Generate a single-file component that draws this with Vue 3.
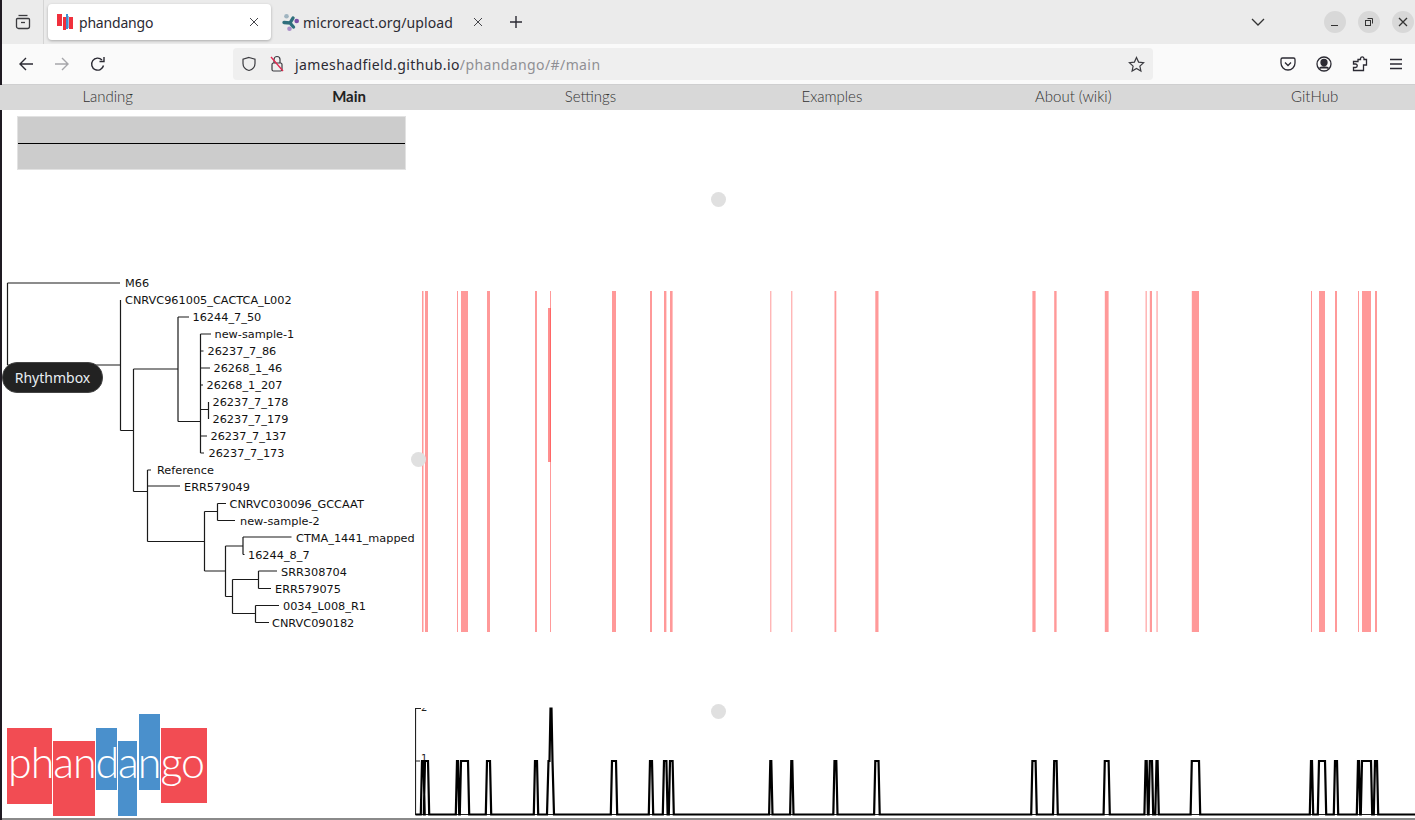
<template>
  <div class="app">
    <div class="strip"></div>
    <div class="window">
      <div class="tabbar">
        <div class="tabview">
          <svg width="16" height="16" viewBox="0 0 16 16" fill="none" stroke="#3b3b3f" stroke-width="1.3">
            <path d="M3.500 1.500h9" />
            <path d="M2.500 4.500h11a1 1 0 0 1 1 1v7a2 2 0 0 1-2 2h-9a2 2 0 0 1-2-2v-7a1 1 0 0 1 1-1z" />
            <path d="M6 8.500h4" />
          </svg>
        </div>
        <div class="tab active">
          <svg class="favicon" width="18" height="17" viewBox="0 0 18 17">
            <rect x="0" y="0" width="5" height="12" fill="#f0303c" />
            <rect x="6" y="3" width="3" height="13" fill="#f0303c" />
            <rect x="9" y="0" width="2" height="15" fill="#3f8fd0" />
            <rect x="11" y="2" width="1" height="12" fill="#8fc0e4" />
            <rect x="12" y="3" width="4" height="12" fill="#f0303c" />
          </svg>
          <span class="tab-title first">phandango</span>
          <svg class="close" width="10" height="10" viewBox="0 0 10 10" stroke="#45454a" stroke-width="1"><path d="M1 1l8 8M9 1l-8 8" /></svg>
        </div>
        <div class="tab second">
          <svg class="favicon" width="17" height="17" viewBox="0 0 17 17">
            <path d="M2 8.500L8 9l3-5M8 9l3.500 4" fill="none" stroke="#2f6f7c" stroke-width="3.400" stroke-linecap="round" />
            <circle cx="4.500" cy="2.300" r="2.300" fill="#9fb4c0" />
            <circle cx="14.700" cy="7" r="2.300" fill="#7a4fa8" />
            <circle cx="7.500" cy="14.700" r="2.300" fill="#a98fc8" />
          </svg>
          <span class="tab-title">microreact.org/upload</span>
          <svg class="close" width="10" height="10" viewBox="0 0 10 10" stroke="#45454a" stroke-width="1"><path d="M1 1l8 8M9 1l-8 8" /></svg>
        </div>
        <svg class="newtab" width="14" height="14" viewBox="0 0 14 14" stroke="#2b2a33" stroke-width="1.400"><path d="M7 1v12M1 7h12" /></svg>
        <div class="tabbar-right">
          <svg class="chevron" width="14" height="8" viewBox="0 0 14 8" fill="none" stroke="#333" stroke-width="1.300"><path d="M1 1l6 6 6-6" /></svg>
          <div class="winbtn">
            <svg width="10" height="10" viewBox="0 0 10 10" stroke="#333" stroke-width="1"><path d="M1 8.500h7" /></svg>
          </div>
          <div class="winbtn">
            <svg width="10" height="10" viewBox="0 0 10 10" fill="none" stroke="#333" stroke-width="1"><rect x="1.500" y="3.500" width="5" height="5" /><path d="M3.500 1.500h5v5" /></svg>
          </div>
          <div class="winbtn">
            <svg width="10" height="10" viewBox="0 0 10 10" stroke="#333" stroke-width="1.300"><path d="M1 1l8 8M9 1l-8 8" /></svg>
          </div>
        </div>
      </div>

      <div class="toolbar">
        <div class="navbtns">
          <svg width="16" height="16" viewBox="0 0 16 16" fill="none" stroke="#2b2a33" stroke-width="1.400"><path d="M15 8H2M8 2L2 8l6 6" /></svg>
          <svg width="16" height="16" viewBox="0 0 16 16" fill="none" stroke="#a6a6aa" stroke-width="1.400"><path d="M1 8h13M8 2l6 6-6 6" /></svg>
          <svg width="16" height="16" viewBox="0 0 16 16" fill="none" stroke="#2b2a33" stroke-width="1.400"><path d="M13.500 9.500A6 6 0 1 1 12 4" /><path d="M14 1v4.500H9.500" /></svg>
        </div>
        <div class="urlbar">
          <svg width="16" height="16" viewBox="0 0 16 16" fill="none" stroke="#3b3b40" stroke-width="1.200"><path d="M8 1.500l6 1.800v4.200c0 3.500-2.500 6-6 7-3.500-1-6-3.500-6-7V3.300z" /></svg>
          <svg class="lock" width="16" height="18" viewBox="0 0 16 18" fill="none">
            <path d="M5 8V4.500a3 3 0 0 1 6 0V8" stroke="#3b3b40" stroke-width="1.200" />
            <rect x="3" y="8" width="10" height="8" rx="1.500" stroke="#3b3b40" stroke-width="1.200" />
            <path d="M2 2l12 14" stroke="#e22850" stroke-width="1.300" />
          </svg>
          <span class="url"><span class="host">jameshadfield.github.io</span><span class="path">/phandango/#/main</span></span>
          <svg class="star" width="17" height="17" viewBox="0 0 17 17" fill="none" stroke="#3b3b40" stroke-width="1.200"><path d="M8.500 1.500l2.100 4.600 5 .6-3.700 3.400 1 4.900-4.400-2.500-4.400 2.500 1-4.900L1.400 6.700l5-.6z" /></svg>
        </div>
        <div class="tools">
          <svg width="16" height="16" viewBox="0 0 16 16" fill="none" stroke="#2b2a33" stroke-width="1.300"><path d="M2.500 2h11A1.500 1.500 0 0 1 15 3.500V7a7 7 0 0 1-14 0V3.500A1.500 1.500 0 0 1 2.500 2z" /><path d="M5 6.500l3 3 3-3" /></svg>
          <svg width="16" height="16" viewBox="0 0 16 16" fill="none" stroke="#2b2a33" stroke-width="1.300"><circle cx="8" cy="8" r="7" /><circle cx="8" cy="6.500" r="3" fill="#2b2a33" /><path d="M3.500 12.500c1-2 8-2 9 0" fill="#2b2a33" /></svg>
          <svg width="16" height="16" viewBox="0 0 16 16" fill="none" stroke="#2b2a33" stroke-width="1.300"><path d="M6 3.500h2.500V2.300a1.800 1.800 0 0 1 3.500 0v1.200h2.500v5.500h-3v5.500H1.500v-3h2a1.500 1.500 0 0 0 0-3.500h-2V5.500H6z" /></svg>
          <svg width="16" height="16" viewBox="0 0 16 16" stroke="#2b2a33" stroke-width="1.300"><path d="M2 3.500h12M2 8h12M2 12.500h12" /></svg>
        </div>
      </div>

      <nav class="sitenav">
        <a v-for="item in navItems" :key="item" :class="{ current: item === 'Main' }">{{ item }}</a>
      </nav>

      <main class="page">
        <div class="top-row">
          <div class="minimap"><div class="minimap-line"></div></div>
        </div>

        <div class="mid-row">
          <svg class="tree" width="413" height="364" viewBox="2 276 413 364">
            <path class="branches" :d="treePath" />
            <text v-for="l in labels" :key="l.name" :x="l.x" :y="l.y" class="leaf">{{ l.name }}</text>
          </svg>
          <svg class="blocks" width="1000" height="364" viewBox="415 276 1000 364">
            <rect v-for="b in bars" :key="b[0]" :x="b[0]" y="291" :width="b[1] - b[0]" height="341" fill="#ff9999" />
            <rect x="548" y="308" width="2" height="154" fill="#ff8f8f" />
            <rect x="550" y="308" width="1" height="154" fill="#ff6666" />
          </svg>
        </div>

        <div class="bottom-row">
          <svg class="logo" width="413" height="178" viewBox="2 640 413 178">
            <rect x="7" y="728" width="45" height="76" fill="#f24c53" />
            <rect x="53" y="741" width="42" height="75" fill="#f24c53" />
            <rect x="96" y="728" width="21" height="62" fill="#4a90cc" />
            <rect x="118" y="741" width="19" height="75" fill="#4a90cc" />
            <rect x="139" y="714" width="21" height="76" fill="#4a90cc" />
            <rect x="161" y="728" width="46" height="75" fill="#f24c53" />
            <text x="8" y="778" class="logotext" textLength="197">phandango</text>
          </svg>
          <svg class="plot" width="1000" height="178" viewBox="415 640 1000 178">
            <clipPath id="plotclip"><rect x="415" y="708" width="1000" height="110" /></clipPath>
            <g clip-path="url(#plotclip)">
              <text x="421" y="711" class="tick">2</text>
              <text x="421" y="762" class="tick">1</text>
            </g>
            <path d="M421 708.500H415.500V814.500H1415M415.500 761H420" fill="none" stroke="#222" stroke-width="1.200" />
            <polyline :points="plotPoints" fill="none" stroke="#000" stroke-width="2.200" />
          </svg>
        </div>

        <span class="handle h1"></span>
        <span class="handle h2"></span>
        <span class="handle h3"></span>
        <div class="tooltip">Rhythmbox</div>
      </main>
      <div class="bottom-edge"></div>
    </div>
  </div>
</template>

<script setup>
import { computed } from 'vue'

const navItems = ['Landing', 'Main', 'Settings', 'Examples', 'About (wiki)', 'GitHub']

const labels = [
  { name: 'M66', x: 125, y: 287 },
  { name: 'CNRVC961005_CACTCA_L002', x: 125, y: 304 },
  { name: '16244_7_50', x: 192.5, y: 321 },
  { name: 'new-sample-1', x: 214.5, y: 338 },
  { name: '26237_7_86', x: 207.5, y: 355 },
  { name: '26268_1_46', x: 213.5, y: 372 },
  { name: '26268_1_207', x: 206.5, y: 389 },
  { name: '26237_7_178', x: 212.5, y: 406 },
  { name: '26237_7_179', x: 212.5, y: 423 },
  { name: '26237_7_137', x: 210.5, y: 440 },
  { name: '26237_7_173', x: 208.5, y: 457 },
  { name: 'Reference', x: 157, y: 474 },
  { name: 'ERR579049', x: 184, y: 491 },
  { name: 'CNRVC030096_GCCAAT', x: 229.5, y: 508 },
  { name: 'new-sample-2', x: 240, y: 525 },
  { name: 'CTMA_1441_mapped', x: 296, y: 542 },
  { name: '16244_8_7', x: 248, y: 559 },
  { name: 'SRR308704', x: 281, y: 576 },
  { name: 'ERR579075', x: 275, y: 593 },
  { name: '0034_L008_R1', x: 283, y: 610 },
  { name: 'CNRVC090182', x: 272, y: 627 }
]

// tree edges as [x1, y1, x2, y2]
const edges = [
  [7.5, 283, 120, 283], [7.5, 283, 7.5, 365], [7.5, 365, 120.5, 365],
  [120.5, 300, 120.5, 430.5], [120.5, 430.5, 133.5, 430.5],
  [133.5, 369, 133.5, 491.5], [133.5, 369, 178, 369],
  [178, 317, 178, 421.5], [178, 317, 189, 317], [178, 421.5, 200, 421.5],
  [200.5, 334, 200.5, 453], [200.5, 334, 211, 334], [200.5, 351, 203.5, 351],
  [200.5, 368, 210, 368], [200.5, 385, 203, 385], [200.5, 409.5, 208.5, 409.5],
  [208.5, 402, 208.5, 419], [200.5, 436, 207, 436], [200.5, 453, 204, 453],
  [147.5, 470, 147.5, 541.5], [147.5, 470, 151, 470], [147.5, 486, 180, 486],
  [133.5, 491.5, 147.5, 491.5], [147.5, 541.5, 204.5, 541.5],
  [204.5, 511.5, 204.5, 571], [204.5, 511.5, 217.5, 511.5],
  [217.5, 503.5, 217.5, 520.5], [217.5, 503.5, 226, 503.5], [217.5, 520.5, 235, 520.5],
  [204.5, 571, 225.5, 571], [225.5, 546, 225.5, 596.5], [225.5, 546, 243, 546],
  [243, 537, 243, 554.5], [243, 537, 291.5, 537], [243, 554.5, 244.5, 554.5],
  [225.5, 596.5, 232.5, 596.5], [232.5, 579.5, 232.5, 613.5], [232.5, 579.5, 258.5, 579.5],
  [258.5, 571, 258.5, 588.5], [258.5, 571, 277, 571], [258.5, 588.5, 271, 588.5],
  [232.5, 613.5, 255.5, 613.5], [255.5, 605.5, 255.5, 622.5], [255.5, 605.5, 279, 605.5],
  [255.5, 622.5, 269, 622.5]
]

const treePath = computed(() => edges.map(e => `M${e[0]} ${e[1]}L${e[2]} ${e[3]}`).join(''))

const bars = [
  [422, 423.5], [425, 428], [457, 458], [461, 468], [487, 490], [535, 537], [550, 551],
  [612, 616], [650, 652], [664, 666.4], [670, 672.6], [770.3, 771.3], [791.3, 792.3],
  [834.5, 836.3], [875.3, 878.5], [1032.4, 1035.6], [1054.2, 1056.6], [1104.8, 1108.6],
  [1145.6, 1146.7], [1149.8, 1152], [1156.5, 1157.6], [1191.8, 1199], [1311, 1312],
  [1319, 1325], [1335, 1337], [1358, 1359], [1362, 1371], [1375, 1377]
]

const base = 814.5
const one = 761
const two = 708.5

const plotPoints = computed(() => {
  const pts = [[415.5, base]]
  for (const [a, b] of bars) {
    if (a === 550) {
      pts.push([547, base], [548.5, one], [549.5, one], [550.5, two], [551.5, two], [552.5, one], [554, base])
      continue
    }
    pts.push([a - 1.2, base], [a, one], [b, one], [b + 1.2, base])
  }
  pts.push([1415, base])
  return pts.map(p => p.join(',')).join(' ')
})
</script>

<style>
html,
body {
  margin: 0;
  background: #fff;
  overflow: hidden;
}
</style>

<style scoped>
.app {
  display: flex;
  width: 1415px;
  height: 820px;
  overflow: hidden;
  font-family: "Lato", "Noto Sans", sans-serif;
  color: #2b2a33;
}

.strip {
  width: 2px;
  background: #1f1a22;
  flex: none;
}

.window {
  flex: 1;
  display: flex;
  flex-direction: column;
  min-width: 0;
  position: relative;
}

.tabbar {
  height: 44px;
  background: #ebebeb;
  display: flex;
  align-items: center;
  flex: none;
}

.tabview {
  width: 41px;
  height: 44px;
  border-right: 1px solid #d4d4d4;
  display: flex;
  align-items: center;
  justify-content: center;
  flex: none;
  margin-right: 4px;
}

.tab {
  width: 223px;
  height: 36px;
  display: flex;
  align-items: center;
  padding: 0 12px 0 9px;
  box-sizing: border-box;
  border-radius: 4px;
  gap: 4px;
  font-family: "Noto Sans", sans-serif;
  font-size: 14px;
  letter-spacing: 0.1px;
  flex: none;
}

.tab.active {
  background: #fff;
  box-shadow: 0 1px 3px rgba(0, 0, 0, 0.28);
  margin-right: 1px;
}

.tab.second {
  padding-left: 10px;
}

.tab-title {
  flex: 1;
  white-space: nowrap;
}

.tab-title.first {
  letter-spacing: -0.2px;
}

.favicon {
  flex: none;
}

.close {
  flex: none;
}

.newtab {
  margin-left: 14px;
}

.tabbar-right {
  margin-left: auto;
  display: flex;
  align-items: center;
  gap: 12px;
  padding-right: 1px;
}

.chevron {
  margin-right: 47px;
}

.winbtn {
  width: 22px;
  height: 22px;
  border-radius: 50%;
  background: #d8d8d8;
  display: flex;
  align-items: center;
  justify-content: center;
}

.toolbar {
  height: 40px;
  flex: none;
  background: #fafafa;
  border-bottom: 1px solid #cfcfd0;
  display: flex;
  align-items: center;
}

.navbtns {
  width: 231px;
  padding-left: 16px;
  box-sizing: border-box;
  display: flex;
  gap: 20px;
  flex: none;
}

.urlbar {
  width: 920px;
  height: 32px;
  background: #efefef;
  border-radius: 4px;
  display: flex;
  align-items: center;
  padding: 0 8px;
  box-sizing: border-box;
  flex: none;
}

.lock {
  margin-left: 12px;
}

.url {
  margin-left: 10px;
  flex: 1;
  font-family: "Noto Sans", sans-serif;
  font-size: 14px;
  letter-spacing: 0.4px;
  white-space: nowrap;
}

.host {
  color: #2b2a33;
}

.path {
  color: #8f8f94;
}

.tools {
  margin-left: 127px;
  display: flex;
  gap: 20px;
}

.sitenav {
  height: 25px;
  flex: none;
  background: #d8d8d8;
  display: grid;
  grid-template-columns: repeat(6, 241.4px);
  transform: translateX(-15px);
  width: calc(100% + 30px);
  align-items: center;
  padding-bottom: 3px;
  box-sizing: border-box;
  font-size: 15px;
  font-weight: 300;
  color: #333;
}

.sitenav a {
  text-align: center;
}

.sitenav a.current {
  font-weight: 700;
  color: #222;
}

.page {
  flex: 1;
  position: relative;
  background: #fff;
  display: flex;
  flex-direction: column;
  min-height: 0;
}

.top-row {
  height: 166px;
  flex: none;
  padding: 6px 0 0 15px;
  box-sizing: border-box;
}

.minimap {
  width: 389px;
  height: 54px;
  background: #cccccc;
  box-sizing: border-box;
  border: 1px solid #e2e2e2;
  position: relative;
  display: flex;
  align-items: center;
}

.minimap-line {
  width: 100%;
  height: 1px;
  background: #000;
}

.mid-row,
.bottom-row {
  display: flex;
  flex: none;
}

.mid-row {
  height: 364px;
}

.bottom-row {
  height: 178px;
}

svg {
  display: block;
}

.branches {
  fill: none;
  stroke: #1a1a1a;
  stroke-width: 1.2;
}

.leaf {
  font-family: "DejaVu Sans", sans-serif;
  font-size: 11.3px;
  fill: #111;
}

.logotext {
  font-family: "Lato", sans-serif;
  font-weight: 300;
  font-size: 43px;
  fill: #fff;
}

.tick {
  font-family: "DejaVu Sans", sans-serif;
  font-size: 10px;
  fill: #222;
}

.handle {
  position: absolute;
  width: 15px;
  height: 15px;
  border-radius: 50%;
  background: #e0e0e0;
}

.h1 {
  left: 709px;
  top: 82px;
}

.h2 {
  left: 409px;
  top: 342px;
}

.h3 {
  left: 709px;
  top: 594px;
}

.tooltip {
  position: absolute;
  left: 0;
  top: 252px;
  width: 101px;
  height: 31px;
  box-sizing: border-box;
  background: #222;
  border: 1px solid #444;
  border-radius: 15px;
  color: #e8eef2;
  font-family: "Noto Sans", sans-serif;
  font-size: 14px;
  display: flex;
  align-items: center;
  justify-content: center;
}

.bottom-edge {
  height: 2px;
  background: #8a8a8a;
  flex: none;
}
</style>
